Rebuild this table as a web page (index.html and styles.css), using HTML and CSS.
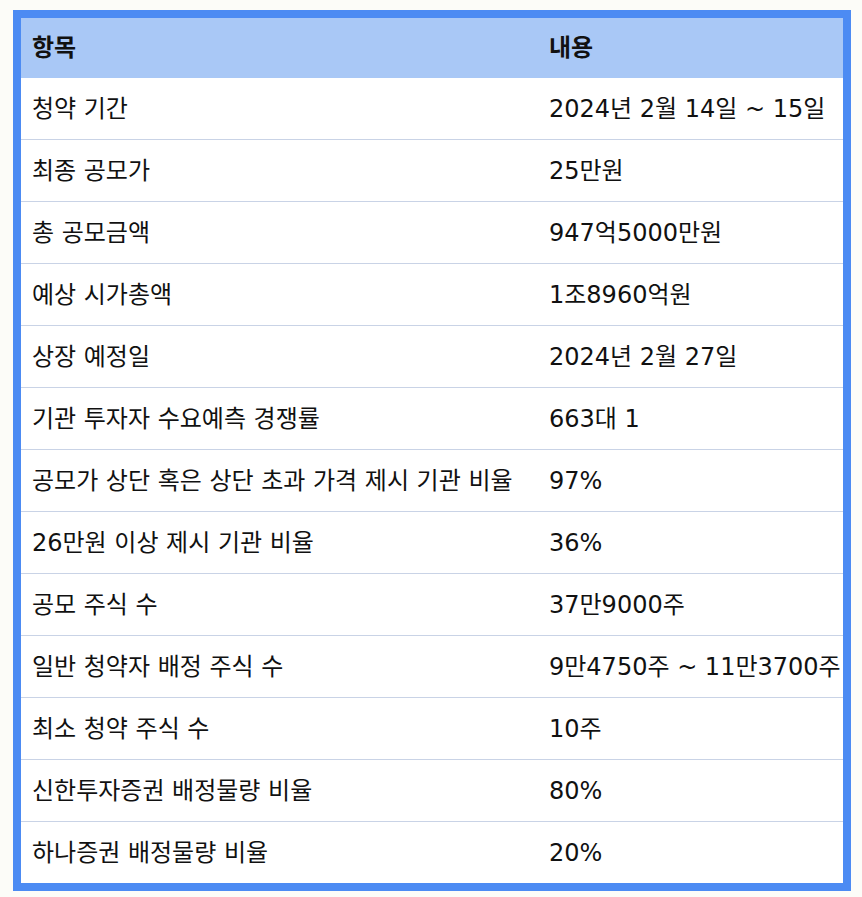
FILE: index.html
```html
<!DOCTYPE html>
<html lang="ko">
<head>
<meta charset="utf-8">
<link rel="stylesheet" href="styles.css">
</head>
<body>
<table class="ipo">
  <thead>
    <tr><th class="c1">항목</th><th class="c2">내용</th></tr>
  </thead>
  <tbody>
    <tr><td>청약 기간</td><td>2024년 2월 14일 ~ 15일</td></tr>
    <tr><td>최종 공모가</td><td>25만원</td></tr>
    <tr><td>총 공모금액</td><td>947억5000만원</td></tr>
    <tr><td>예상 시가총액</td><td>1조8960억원</td></tr>
    <tr><td>상장 예정일</td><td>2024년 2월 27일</td></tr>
    <tr><td>기관 투자자 수요예측 경쟁률</td><td>663대 1</td></tr>
    <tr><td>공모가 상단 혹은 상단 초과 가격 제시 기관 비율</td><td>97%</td></tr>
    <tr><td>26만원 이상 제시 기관 비율</td><td>36%</td></tr>
    <tr><td>공모 주식 수</td><td>37만9000주</td></tr>
    <tr><td>일반 청약자 배정 주식 수</td><td>9만4750주 ~ 11만3700주</td></tr>
    <tr><td>최소 청약 주식 수</td><td>10주</td></tr>
    <tr><td>신한투자증권 배정물량 비율</td><td>80%</td></tr>
    <tr><td>하나증권 배정물량 비율</td><td>20%</td></tr>
  </tbody>
</table>
</body>
</html>
```
FILE: styles.css
```css
html, body {
  margin: 0;
  padding: 0;
  background: #fcfcf8;
}
body {
  padding: 10px 0 0 13px;
  font-family: "DejaVu Sans", "Noto Sans CJK KR", sans-serif;
  color: #111;
}
.ipo {
  border-collapse: collapse;
  border: 8px solid #4c8bf3;
  width: 838px;
  table-layout: fixed;
  background: #fff;
}
.ipo th, .ipo td {
  font-size: 24px;
  text-align: left;
  padding: 0 0 0 11px;
  white-space: nowrap;
  line-height: 1;
}
.ipo th {
  background: #a9c8f6;
  font-weight: 700;
  height: 60px;
}
.ipo .c1 { width: 506px; }
.ipo td {
  font-weight: 400;
  height: 61px;
  border-top: 1.5px solid #c9d3e6;
}
.ipo tbody tr:first-child td { border-top: none; }
```
